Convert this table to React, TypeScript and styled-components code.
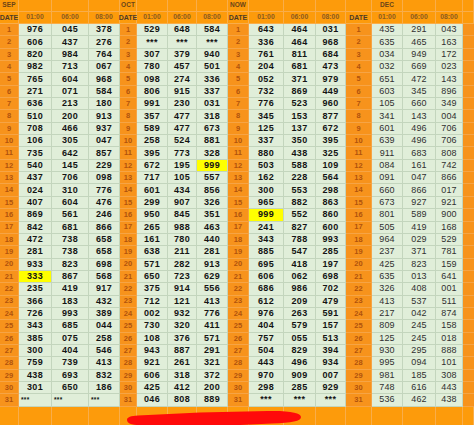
import React from "react";
import styled, { createGlobalStyle, css } from "styled-components";

const GlobalStyle = createGlobalStyle`
  html, body { margin: 0; padding: 0; background: #fd9b0b; }
  body { width: 474px; height: 425px; overflow: hidden; }
  * { box-sizing: border-box; }
`;

type Month = {
  name: string;
  labelInFirst?: boolean;
  light?: boolean;
  rows: string[];
  highlight?: { row: number; col: number };
  leftRow?: number;
};

const months: Month[] = [
  {
    name: "SEP",
    highlight: { row: 21, col: 0 },
    leftRow: 31,
    rows: [
      "976 045 378", "606 437 276", "820 984 764", "982 713 067", "765 604 968",
      "271 071 584", "636 213 180", "510 200 913", "708 466 937", "106 305 047",
      "735 642 857", "540 145 229", "437 706 098", "024 310 776", "407 604 476",
      "869 561 246", "842 681 866", "472 738 658", "281 738 658", "933 823 698",
      "333 867 568", "235 419 917", "366 183 432", "726 993 389", "343 685 044",
      "385 075 258", "300 404 546", "759 739 413", "438 693 832", "301 650 186",
      "*** *** ***",
    ],
  },
  {
    name: "OCT",
    highlight: { row: 12, col: 2 },
    rows: [
      "529 648 584", "*** *** ***", "307 379 940", "780 457 501", "098 274 336",
      "806 915 337", "991 230 031", "357 477 318", "589 477 673", "258 524 881",
      "395 773 328", "672 195 999", "717 105 557", "601 434 856", "299 907 326",
      "950 845 351", "265 988 463", "161 780 440", "638 211 281", "571 282 913",
      "650 723 629", "375 914 556", "712 121 413", "002 932 776", "730 320 411",
      "108 376 571", "943 887 291", "921 261 321", "606 318 372", "425 412 200",
      "046 808 889",
    ],
  },
  {
    name: "NOW",
    highlight: { row: 16, col: 0 },
    rows: [
      "643 464 031", "336 464 968", "761 811 684", "204 681 473", "052 371 979",
      "732 869 449", "776 523 960", "345 153 877", "125 137 672", "337 350 395",
      "880 438 325", "503 588 109", "162 228 564", "300 553 298", "965 882 863",
      "999 552 860", "241 827 600", "343 788 993", "885 547 285", "695 418 197",
      "606 062 698", "686 986 702", "612 209 479", "976 263 591", "404 579 157",
      "757 055 513", "504 829 394", "443 496 934", "970 909 007", "298 285 929",
      "*** *** ***",
    ],
  },
  {
    name: "DEC",
    labelInFirst: true,
    light: true,
    rows: [
      "435 291 043", "635 465 163", "034 949 172", "032 669 023", "651 472 143",
      "603 345 896", "105 660 349", "341 143 004", "601 496 706", "639 496 706",
      "911 683 808", "084 161 742", "091 047 866", "660 866 017", "673 927 921",
      "801 589 900", "505 419 168", "964 029 529", "237 371 781", "425 823 159",
      "635 013 641", "326 408 001", "413 537 511", "217 042 874", "809 245 158",
      "125 245 018", "930 295 888", "995 094 101", "981 185 308", "748 616 443",
      "536 462 438",
    ],
  },
];

const times = ["01:00", "06:00", "08:00"];

const Sheet = styled.div`
  position: relative;
  display: grid;
  grid-template-columns:
    19px 33px 37px 31px
    17px 31px 29px 31px
    21px 35px 32px 30px
    26px 31px 33px 27px
    11px;
  grid-template-rows: 12px 12px repeat(31, 12.355px) 18px;
  width: 474px;
  height: 425px;
  background: #fd9b0b;
  font-family: "Liberation Sans", Arial, sans-serif;
  overflow: hidden;
`;

const cellBase = css`
  display: flex;
  align-items: center;
  justify-content: center;
  line-height: 1;
  white-space: nowrap;
  border-right: 1px solid;
  border-bottom: 1px solid;
`;

const MonthCell = styled.div`
  ${cellBase};
  background: #fd9b0b;
  border-color: #f9ad4a;
  font-size: 6.5px;
  font-weight: 700;
  color: #6a4418;
  letter-spacing: 0.1px;
`;

const HeadCell = styled.div<{ $date?: boolean }>`
  ${cellBase};
  background: #fd9b0b;
  border-color: #f9ad4a;
  font-size: ${(p) => (p.$date ? "7px" : "6.8px")};
  font-weight: 700;
  color: ${(p) => (p.$date ? "#4e3a26" : "#8a5a20")};
`;

const DateCell = styled.div`
  ${cellBase};
  background: #f7931c;
  border-color: #f6a445;
  font-size: 7.5px;
  font-weight: 700;
  color: #b0520c;
`;

const ValueCell = styled.div<{ $light?: boolean; $hl?: boolean; $left?: boolean }>`
  ${cellBase};
  justify-content: ${(p) => (p.$left ? "flex-start" : "center")};
  padding-left: ${(p) => (p.$left ? "2px" : "0")};
  background: ${(p) => (p.$hl ? "#ffff00" : "#e0eed9")};
  border-color: #c3d5bd;
  font-size: ${(p) => (p.$left ? "6.5px" : "9px")};
  font-weight: ${(p) => (p.$light ? 400 : 700)};
  color: ${(p) => (p.$light ? "#303030" : "#141414")};
  letter-spacing: ${(p) => (p.$light ? "0.1px" : "0.3px")};
`;

const FillerCell = styled.div`
  border-bottom: 1px solid #f6a445;
  background: #f7931c;
`;

const BottomCell = styled.div`
  background: #fd9b0b;
  border-right: 1px solid #f9ad4a;
`;

const Scribble = styled.svg`
  position: absolute;
  left: 0;
  top: 0;
  width: 474px;
  height: 425px;
  pointer-events: none;
`;

export default function App() {
  const cells: React.ReactNode[] = [];

  months.forEach((m, mi) => {
    for (let c = 0; c < 4; c++) {
      const show = m.labelInFirst ? c === 1 : c === 0;
      cells.push(<MonthCell key={`m-${mi}-${c}`}>{show ? m.name : ""}</MonthCell>);
    }
  });
  cells.push(<MonthCell key="m-fill" />);

  months.forEach((_, mi) => {
    cells.push(
      <HeadCell key={`h-${mi}-d`} $date>
        DATE
      </HeadCell>
    );
    times.forEach((t, ti) =>
      cells.push(<HeadCell key={`h-${mi}-${ti}`}>{t}</HeadCell>)
    );
  });
  cells.push(<HeadCell key="h-fill" />);

  for (let r = 0; r < 31; r++) {
    months.forEach((m, mi) => {
      cells.push(<DateCell key={`d-${r}-${mi}`}>{r + 1}</DateCell>);
      m.rows[r].split(" ").forEach((v, ci) => {
        const hl = !!m.highlight && m.highlight.row === r + 1 && m.highlight.col === ci;
        const left = m.leftRow === r + 1;
        cells.push(
          <ValueCell key={`v-${r}-${mi}-${ci}`} $light={m.light} $hl={hl} $left={left}>
            {v}
          </ValueCell>
        );
      });
    });
    cells.push(<FillerCell key={`f-${r}`} />);
  }

  for (let c = 0; c < 17; c++) cells.push(<BottomCell key={`b-${c}`} />);

  return (
    <>
      <GlobalStyle />
      <Sheet>
        {cells}
        <Scribble viewBox="0 0 474 425">
          <path
            d="M127 420 C127 417 131 416 138 415.5 L200 412.5 L268 411 C290 410.5 301 413 301 417 C301 421 292 423 272 423.5 L240 425 L140 425 C131 425 127 423 127 420 Z"
            fill="#ff0a0a"
          />
        </Scribble>
      </Sheet>
    </>
  );
}
